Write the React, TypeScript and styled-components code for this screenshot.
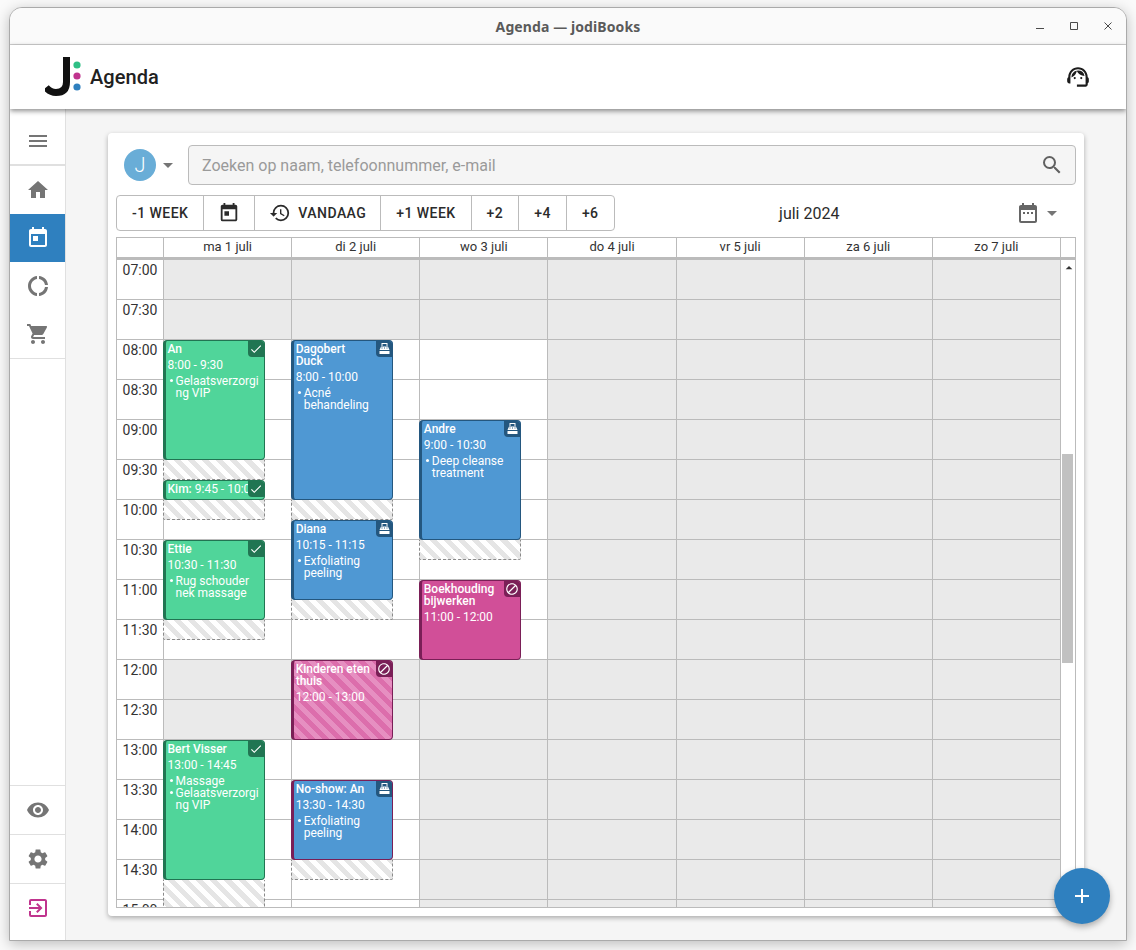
import React, { FunctionComponent } from 'react';
import styled, { createGlobalStyle } from 'styled-components';
import {
  MdAdd,
  MdArrowDropDown,
  MdArrowDropUp,
  MdBlock,
  MdCheck,
  MdDateRange,
  MdDonutLarge,
  MdExitToApp,
  MdHistory,
  MdHome,
  MdMenu,
  MdSearch,
  MdSettings,
  MdShoppingCart,
  MdSupportAgent,
  MdToday,
  MdVisibility,
} from 'react-icons/md';

const lineColor = '#bbbbbb';
const brandBlue = '#2f80bf';
const slotHeight = 40;
const firstMinute = 7 * 60;

type Tone = 'green' | 'blue' | 'pink';

const fills: Record<Tone, string> = { green: '#50d59a', blue: '#4f98d3', pink: '#d14f98' };
const edges: Record<Tone, string> = { green: '#217552', blue: '#24577f', pink: '#7a1f57' };

const GlobalStyle = createGlobalStyle`
  html, body {
    margin: 0;
    height: 100%;
    background: #fafafa;
    font-family: Roboto, "Liberation Sans", sans-serif;
  }
  * { box-sizing: border-box; }
`;

const Desktop = styled.div`
  padding: 7px 9px;
`;

const Window = styled.div`
  position: relative;
  display: flex;
  flex-direction: column;
  height: 934px;
  border: 1px solid #aaaaaa;
  border-radius: 13px 13px 0 0;
  background: #f5f5f5;
  box-shadow: 0 3px 14px rgba(0, 0, 0, 0.25);
  overflow: hidden;
`;

const TitleBar = styled.div`
  position: relative;
  display: flex;
  flex: none;
  align-items: center;
  justify-content: center;
  height: 37px;
  background: #fafafa;
  border-bottom: 1px solid #cfcfcf;
`;

const TitleText = styled.span`
  font-family: 'Noto Sans', sans-serif;
  font-size: 14px;
  font-weight: 700;
  letter-spacing: 0.1px;
  color: #5a5a5a;
`;

const WindowControls = styled.div`
  position: absolute;
  top: 12px;
  right: 12px;
  display: flex;
  gap: 22px;
  color: #4a4a4a;
`;

const AppHeader = styled.header`
  position: relative;
  z-index: 2;
  display: flex;
  flex: none;
  align-items: center;
  height: 64px;
  padding: 0 35px 0 35px;
  background: #ffffff;
  box-shadow: 0 2px 5px rgba(0, 0, 0, 0.45);
`;

const Logo = styled.svg`
  width: 38px;
  height: 42px;
  margin-right: 7px;
`;

const PageTitle = styled.h1`
  flex: 1;
  margin: 0;
  font-size: 20px;
  font-weight: 500;
  letter-spacing: 0.05px;
  color: #212121;
`;

const SupportIcon = styled(MdSupportAgent)`
  font-size: 26px;
  color: #1c1c1c;
`;

const Body = styled.div`
  display: flex;
  flex: 1;
  min-height: 0;
`;

const Sidebar = styled.nav`
  display: flex;
  flex: none;
  flex-direction: column;
  width: 56px;
  padding-bottom: 8px;
  background: #ffffff;
  border-right: 1px solid #e0e0e0;
`;

const SideGroup = styled.div<{ $bottom?: boolean }>`
  display: flex;
  flex-direction: column;
  margin-top: ${(props) => (props.$bottom ? 'auto' : '0')};
  border-bottom: ${(props) => (props.$bottom ? 'none' : '1px solid #e0e0e0')};
`;

const SideItem = styled.div<{ $active?: boolean; $tall?: boolean; $ruled?: boolean; $accent?: boolean }>`
  display: flex;
  align-items: center;
  justify-content: center;
  height: ${(props) => (props.$tall ? '55px' : props.$ruled ? '49px' : '48px')};
  padding-top: ${(props) => (props.$tall ? '8px' : '0')};
  font-size: 24px;
  color: ${(props) => (props.$active ? '#ffffff' : props.$accent ? '#c0348e' : '#757575')};
  background: ${(props) => (props.$active ? brandBlue : 'transparent')};
  border-top: ${(props) => (props.$ruled ? '1px solid #e0e0e0' : 'none')};
`;

const Main = styled.main`
  display: flex;
  flex: 1;
  min-width: 0;
  padding: 24px 42px;
`;

const Card = styled.section`
  display: flex;
  flex: 1;
  flex-direction: column;
  min-width: 0;
  padding: 12px 8px 8px;
  background: #ffffff;
  border-radius: 4px;
  box-shadow: 0 2px 5px rgba(0, 0, 0, 0.3);
`;

const SearchRow = styled.div`
  display: flex;
  flex: none;
  align-items: center;
  height: 40px;
  padding-left: 8px;
`;

const Avatar = styled.div`
  display: flex;
  align-items: center;
  justify-content: center;
  width: 32px;
  height: 32px;
  border-radius: 50%;
  background: #69add7;
  font-size: 20px;
  font-weight: 300;
  color: #ffffff;
`;

const Caret = styled(MdArrowDropDown)`
  flex: none;
  font-size: 24px;
  color: #757575;
`;

const AvatarCaret = styled(Caret)`
  margin-right: 8px;
`;

const SearchField = styled.div`
  display: flex;
  flex: 1;
  align-items: center;
  justify-content: space-between;
  height: 40px;
  padding: 0 11px 0 13px;
  background: #f5f5f5;
  border: 1px solid ${lineColor};
  border-radius: 4px;
  font-size: 16px;
  color: #9a9a9a;
`;

const SearchIcon = styled(MdSearch)`
  font-size: 24px;
  color: #616161;
`;

const Toolbar = styled.div`
  display: flex;
  flex: none;
  align-items: center;
  margin-top: 10px;
  height: 36px;
`;

const ButtonGroup = styled.div`
  display: flex;
  flex: none;
  height: 36px;
  border: 1px solid ${lineColor};
  border-radius: 4px;
`;

const GroupButton = styled.button<{ $compact?: boolean }>`
  display: flex;
  align-items: center;
  gap: 7px;
  height: 100%;
  padding: 0 ${(props) => (props.$compact ? '14px' : '15px')};
  background: transparent;
  border: none;
  border-left: 1px solid ${lineColor};
  font-family: inherit;
  font-size: 14px;
  font-weight: 500;
  letter-spacing: 0.45px;
  color: #2b2b2b;

  &:first-child {
    border-left: none;
  }

  svg {
    font-size: 22px;
  }
`;

const MonthLabel = styled.div`
  flex: 1;
  padding-right: 12px;
  text-align: center;
  font-size: 16px;
  color: #2b2b2b;
`;

const RangePicker = styled.div`
  display: flex;
  align-items: center;
  padding-right: 12px;
`;

const RangeIcon = styled(MdDateRange)`
  font-size: 24px;
  color: #666666;
`;

const Table = styled.div`
  display: flex;
  flex: 1;
  flex-direction: column;
  min-height: 0;
  margin-top: 6px;
  border: 1px solid ${lineColor};
`;

const TableHead = styled.div`
  display: grid;
  flex: none;
  grid-template-columns: 47px repeat(7, 1fr) 14px;
  height: 22px;
  border-bottom: 3px solid ${lineColor};
`;

const HeadCell = styled.div`
  font-size: 13px;
  line-height: 18px;
  text-align: center;
  color: #333333;
  border-right: 1px solid ${lineColor};

  &:last-child {
    border-right: none;
  }
`;

const TableBody = styled.div`
  display: grid;
  flex: 1;
  grid-template-columns: 47px repeat(7, 1fr) 14px;
  min-height: 0;
  overflow: hidden;
`;

const TimeColumn = styled.div`
  border-right: 1px solid ${lineColor};
`;

const TimeCell = styled.div`
  height: ${slotHeight}px;
  font-size: 14px;
  line-height: 20px;
  text-align: center;
  color: #333333;
  border-bottom: 1px solid ${lineColor};
`;

const DayColumn = styled.div`
  position: relative;
  border-right: 1px solid ${lineColor};
`;

const Slot = styled.div<{ $open: boolean }>`
  height: ${slotHeight}px;
  background: ${(props) => (props.$open ? '#ffffff' : '#eaeaea')};
  border-bottom: 1px solid ${lineColor};
`;

const Buffer = styled.div`
  position: absolute;
  left: -1px;
  width: 80%;
  background: repeating-linear-gradient(45deg, #e5e5e5 0 5px, #ffffff 5px 10px);
  border: 1px dashed #8a8a8a;
  border-top: none;
  border-radius: 0 0 2px 2px;
`;

const Event = styled.div<{ $tone: Tone; $edge: Tone; $hatched?: boolean }>`
  position: absolute;
  left: -1px;
  width: 80%;
  padding: 2px 2px 0 1.5px;
  background: ${(props) =>
    props.$hatched
      ? 'repeating-linear-gradient(45deg, #dc6eac 0 5px, #e68fc1 5px 10px)'
      : fills[props.$tone]};
  border: 1px solid ${(props) => edges[props.$edge]};
  border-left-width: 3px;
  border-radius: 4px;
  font-size: 12px;
  line-height: 12px;
  color: #ffffff;
  overflow: hidden;
`;

const EventTitle = styled.div`
  padding-right: 17px;
  font-weight: 500;
`;

const EventInline = styled.div`
  white-space: nowrap;

  b {
    font-weight: 500;
  }
`;

const EventTime = styled.div`
  margin-top: 4px;
`;

const EventList = styled.ul`
  margin: 4px 0 0;
  padding: 0 0 0 8px;
  list-style: none;
`;

const EventItem = styled.li`
  position: relative;
  overflow-wrap: anywhere;

  &::before {
    content: '';
    position: absolute;
    top: 4px;
    left: -6px;
    width: 3px;
    height: 3px;
    border-radius: 50%;
    background: #ffffff;
  }
`;

const Badge = styled.div<{ $edge: Tone }>`
  position: absolute;
  top: -1px;
  right: -1px;
  display: flex;
  align-items: center;
  justify-content: center;
  width: 17px;
  height: 17px;
  background: ${(props) => edges[props.$edge]};
  border-bottom-left-radius: 4px;
  font-size: 14px;
  color: #ffffff;
`;

const ScrollTrack = styled.div`
  background: #ffffff;
`;

const ScrollArrow = styled(MdArrowDropUp)`
  display: block;
  margin: 0 auto;
  font-size: 16px;
  color: #333333;
`;

const ScrollThumb = styled.div`
  width: 11px;
  height: 209px;
  margin: 178px 0 0 1px;
  background: #c1c1c1;
`;

const Fab = styled.button`
  position: absolute;
  right: 16px;
  bottom: 16px;
  display: flex;
  align-items: center;
  justify-content: center;
  width: 56px;
  height: 56px;
  padding: 0;
  background: ${brandBlue};
  border: none;
  border-radius: 50%;
  box-shadow: 0 3px 6px rgba(0, 0, 0, 0.3);
  font-size: 24px;
  color: #ffffff;
`;

interface AgendaEvent {
  start: number;
  end: number;
  bufferEnd?: number;
  title: string;
  time?: string;
  inline?: boolean;
  items?: string[];
  tone: Tone;
  edge?: Tone;
  hatched?: boolean;
}

const at = (hour: number, minute = 0) => hour * 60 + minute;

const days: { label: string; open: [number, number][]; events: AgendaEvent[] }[] = [
  {
    label: 'ma 1 juli',
    open: [
      [at(8), at(12)],
      [at(13), at(16)],
    ],
    events: [
      { start: at(8), end: at(9, 30), bufferEnd: at(9, 45), title: 'An', time: '8:00 - 9:30', items: ['Gelaatsverzorging VIP'], tone: 'green' },
      { start: at(9, 45), end: at(10), bufferEnd: at(10, 15), title: 'Kim:', time: '9:45 - 10:00', inline: true, tone: 'green' },
      { start: at(10, 30), end: at(11, 30), bufferEnd: at(11, 45), title: 'Ettie', time: '10:30 - 11:30', items: ['Rug schouder nek massage'], tone: 'green' },
      { start: at(13), end: at(14, 45), bufferEnd: at(15, 15), title: 'Bert Visser', time: '13:00 - 14:45', items: ['Massage', 'Gelaatsverzorging VIP'], tone: 'green' },
    ],
  },
  {
    label: 'di 2 juli',
    open: [
      [at(8), at(12)],
      [at(13), at(16)],
    ],
    events: [
      { start: at(8), end: at(10), bufferEnd: at(10, 15), title: 'Dagobert Duck', time: '8:00 - 10:00', items: ['Acné behandeling'], tone: 'blue' },
      { start: at(10, 15), end: at(11, 15), bufferEnd: at(11, 30), title: 'Diana', time: '10:15 - 11:15', items: ['Exfoliating peeling'], tone: 'blue' },
      { start: at(12), end: at(13), title: 'Kinderen eten thuis', time: '12:00 - 13:00', tone: 'pink', hatched: true },
      { start: at(13, 30), end: at(14, 30), bufferEnd: at(14, 45), title: 'No-show: An', time: '13:30 - 14:30', items: ['Exfoliating peeling'], tone: 'blue', edge: 'pink' },
    ],
  },
  {
    label: 'wo 3 juli',
    open: [[at(8), at(12)]],
    events: [
      { start: at(9), end: at(10, 30), bufferEnd: at(10, 45), title: 'Andre', time: '9:00 - 10:30', items: ['Deep cleanse treatment'], tone: 'blue' },
      { start: at(11), end: at(12), title: 'Boekhouding bijwerken', time: '11:00 - 12:00', tone: 'pink' },
    ],
  },
  { label: 'do 4 juli', open: [], events: [] },
  { label: 'vr 5 juli', open: [], events: [] },
  { label: 'za 6 juli', open: [], events: [] },
  { label: 'zo 7 juli', open: [], events: [] },
];

const slots = Array.from({ length: 18 }, (_, index) => firstMinute + index * 30);

const toPixels = (minutes: number) => (minutes / 30) * slotHeight;

const timeLabel = (minutes: number) =>
  `${String(Math.floor(minutes / 60)).padStart(2, '0')}:${minutes % 60 === 0 ? '00' : '30'}`;

// kassa icon: bon bovenop, toetsen op de body
const RegisterIcon = () => (
  <svg width="13" height="13" viewBox="0 0 13 13" fill="currentColor">
    <path d="M3.5 1h6v3h-1V2h-4v2h-1z" />
    <path d="M3 4.5h7L11.5 8h-10z" />
    <path d="M1.5 9h10v3h-10z" />
    <path d="M3.5 5.5h1v1h-1zM6 5.5h1v1H6zM8.5 5.5h1v1h-1z" fill="#24577f" />
  </svg>
);

const badgeIcons: Record<Tone, React.ReactNode> = {
  green: <MdCheck />,
  blue: <RegisterIcon />,
  pink: <MdBlock />,
};

const EventBlock: FunctionComponent<{ event: AgendaEvent }> = ({ event }) => (
  <>
    {event.bufferEnd && (
      <Buffer
        style={{
          top: toPixels(event.end - firstMinute),
          height: toPixels(event.bufferEnd - event.end),
        }}
      />
    )}
    <Event
      $tone={event.tone}
      $edge={event.edge || event.tone}
      $hatched={event.hatched}
      style={{ top: toPixels(event.start - firstMinute), height: toPixels(event.end - event.start) }}
    >
      {event.inline ? (
        <EventInline>
          <b>{event.title}</b> {event.time}
        </EventInline>
      ) : (
        <>
          <EventTitle>{event.title}</EventTitle>
          <EventTime>{event.time}</EventTime>
        </>
      )}
      {event.items && (
        <EventList>
          {event.items.map((item) => (
            <EventItem key={item}>{item}</EventItem>
          ))}
        </EventList>
      )}
      <Badge $edge={event.tone}>{badgeIcons[event.tone]}</Badge>
    </Event>
  </>
);

const App: FunctionComponent = () => {
  return (
    <Desktop>
      <GlobalStyle />
      <Window>
        <TitleBar>
          <TitleText>Agenda — jodiBooks</TitleText>
          <WindowControls>
            <svg width="12" height="12" viewBox="0 0 12 12" fill="none" stroke="currentColor">
              <path d="M2 8.5h8" />
            </svg>
            <svg width="12" height="12" viewBox="0 0 12 12" fill="none" stroke="currentColor">
              <path d="M2.5 2.5h7v7h-7z" />
            </svg>
            <svg width="12" height="12" viewBox="0 0 12 12" fill="none" stroke="currentColor">
              <path d="M2.5 2.5l7 7M9.5 2.5l-7 7" />
            </svg>
          </WindowControls>
        </TitleBar>
        <AppHeader>
          <Logo viewBox="0 0 38 42">
            <path d="M21.5 1V26Q21.5 36.5 11 36.5Q5 36.5 1 31.5" fill="none" stroke="#111111" strokeWidth="7" />
            <circle cx="32" cy="9" r="3.6" fill="#2fbf85" />
            <circle cx="32" cy="20" r="3.6" fill="#c0348e" />
            <circle cx="32" cy="31" r="3.6" fill="#2f80bf" />
          </Logo>
          <PageTitle>Agenda</PageTitle>
          <SupportIcon />
        </AppHeader>
        <Body>
          <Sidebar>
            <SideGroup>
              <SideItem $tall>
                <MdMenu />
              </SideItem>
            </SideGroup>
            <SideGroup>
              <SideItem $ruled>
                <MdHome />
              </SideItem>
              <SideItem $active>
                <MdToday />
              </SideItem>
              <SideItem>
                <MdDonutLarge />
              </SideItem>
              <SideItem>
                <MdShoppingCart />
              </SideItem>
            </SideGroup>
            <SideGroup $bottom>
              <SideItem $ruled>
                <MdVisibility />
              </SideItem>
              <SideItem $ruled>
                <MdSettings />
              </SideItem>
              <SideItem $ruled $accent>
                <MdExitToApp />
              </SideItem>
            </SideGroup>
          </Sidebar>
          <Main>
            <Card>
              <SearchRow>
                <Avatar>J</Avatar>
                <AvatarCaret />
                <SearchField>
                  Zoeken op naam, telefoonnummer, e-mail
                  <SearchIcon />
                </SearchField>
              </SearchRow>
              <Toolbar>
                <ButtonGroup>
                  <GroupButton>-1 WEEK</GroupButton>
                  <GroupButton $compact>
                    <MdToday />
                  </GroupButton>
                  <GroupButton $compact>
                    <MdHistory />
                    VANDAAG
                  </GroupButton>
                  <GroupButton>+1 WEEK</GroupButton>
                  <GroupButton>+2</GroupButton>
                  <GroupButton>+4</GroupButton>
                  <GroupButton>+6</GroupButton>
                </ButtonGroup>
                <MonthLabel>juli 2024</MonthLabel>
                <RangePicker>
                  <RangeIcon />
                  <Caret />
                </RangePicker>
              </Toolbar>
              <Table>
                <TableHead>
                  <HeadCell />
                  {days.map((day) => (
                    <HeadCell key={day.label}>{day.label}</HeadCell>
                  ))}
                  <HeadCell />
                </TableHead>
                <TableBody>
                  <TimeColumn>
                    {slots.map((slot) => (
                      <TimeCell key={slot}>{timeLabel(slot)}</TimeCell>
                    ))}
                  </TimeColumn>
                  {days.map((day) => (
                    <DayColumn key={day.label}>
                      {slots.map((slot) => (
                        <Slot
                          key={slot}
                          $open={day.open.some(([from, to]) => slot >= from && slot < to)}
                        />
                      ))}
                      {day.events.map((event) => (
                        <EventBlock key={event.start} event={event} />
                      ))}
                    </DayColumn>
                  ))}
                  <ScrollTrack>
                    <ScrollArrow />
                    <ScrollThumb />
                  </ScrollTrack>
                </TableBody>
              </Table>
            </Card>
          </Main>
        </Body>
        <Fab>
          <MdAdd />
        </Fab>
      </Window>
    </Desktop>
  );
};

export default App;
